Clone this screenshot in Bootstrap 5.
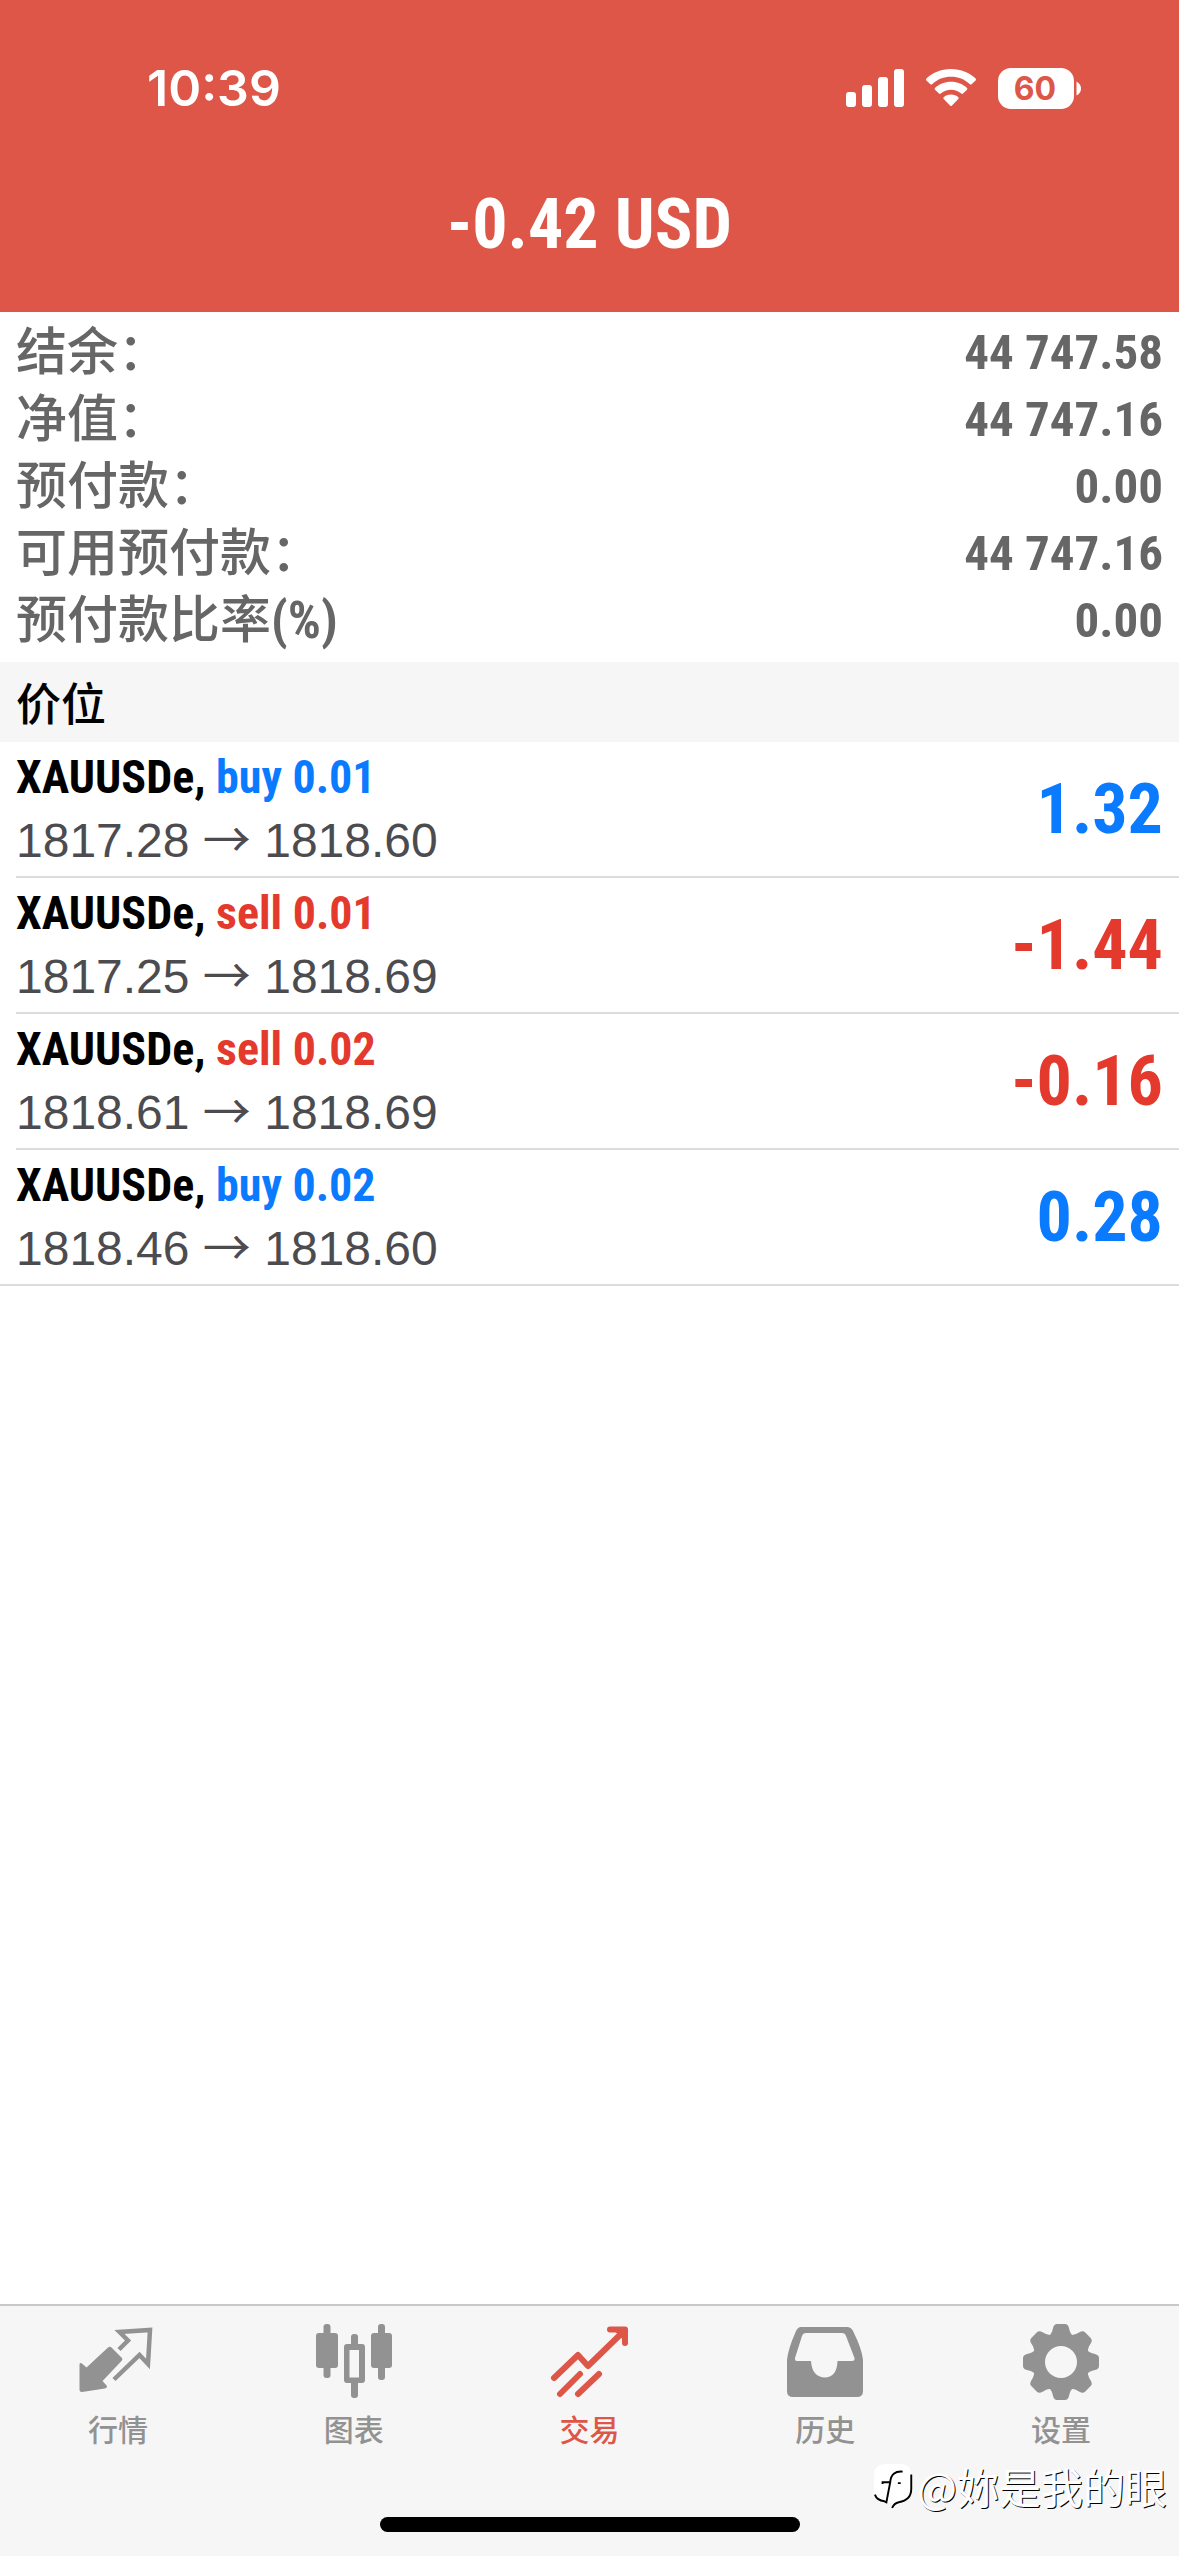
<!DOCTYPE html>
<html lang="zh-CN">
<head>
<meta charset="utf-8">
<meta name="viewport" content="width=device-width, initial-scale=1">
<title>交易</title>
<link rel="stylesheet" href="https://cdn.jsdelivr.net/npm/bootstrap@5.3.0/dist/css/bootstrap.min.css">
<style>
:root{--brand:#dd5648;--buy:#0a7aff;--sell:#e43a2e;--cond:"Roboto Condensed","Liberation Sans","Noto Sans CJK SC",sans-serif}
body{font-family:var(--cond);color:#000;background:#fff}
.app-head{background:var(--brand)}
.status-bar{height:176px;padding:0 98px 0 147px}
.clock{font:600 50px/1 Inter,sans-serif}
.status-icons{gap:22px}
.batt-text{font:700 32px Inter,sans-serif}
.balance{height:136px}
.balance-title{font-size:70px;line-height:96px;font-weight:700}
.summary{padding:7px 16px 8px;color:#666;font-size:51px;line-height:67px}
.summary dt{font-family:"Noto Sans CJK SC",sans-serif;font-weight:500;line-height:58px}
.summary dt b{font:700 52px/1 var(--cond)}
.summary dd{font:700 49px/67px var(--cond)}
.band{background:#f6f6f6;font:500 45px/80px "Noto Sans CJK SC",sans-serif;padding:0 16px}
.trade{height:136px;margin-left:16px;padding-right:16px;border-bottom:2px solid #dcdcde}
.trade-last{margin-left:0;padding-left:16px}
.trade-name{font-size:46px;line-height:64px;font-weight:700}
.trade-price{font:48px/64px "Liberation Sans",sans-serif;color:#4c4c50}
.arr{font-family:"Noto Sans CJK SC",sans-serif;line-height:1}
.pnl{font-size:70px;line-height:1;font-weight:700}
.c-buy{color:var(--buy)}.c-sell{color:var(--sell)}
.tabs{background:#f6f6f6;border-top:2px solid #c8c8c8;height:252px}
.tab-item{color:#929292;font:500 30px/52px "Noto Sans CJK SC",sans-serif;padding-top:16px}
.tab-item.active{color:var(--brand)}
.tab-item svg{width:80px;height:80px}
.home-bar{width:420px;height:15px;bottom:24px;border-radius:8px;background:#000}
.wmark{right:12px;bottom:40px;color:#fff;font:400 42px/60px "Noto Sans CJK SC",sans-serif;text-shadow:1px 1px 0 #000}
</style>
<script src="https://cdn.jsdelivr.net/npm/bootstrap@5.3.0/dist/js/bootstrap.bundle.min.js"></script>
</head>
<body>
<div class="d-flex flex-column min-vh-100">
<header class="app-head text-white">
  <div class="status-bar d-flex align-items-center justify-content-between">
    <span class="clock">10:39</span>
    <span class="status-icons d-flex align-items-center">
      <svg width="58" height="38" fill="#fff"><rect y="23" width="10" height="15" rx="3"/><rect x="16" y="16" width="10" height="22" rx="3"/><rect x="32" y="8" width="10" height="30" rx="3"/><rect x="48" width="10" height="38" rx="3"/></svg>
      <svg width="50" height="38" viewBox="0 0 50 38" fill="#fff"><path d="M25 0C35 0 44 4 49.600 9.600Q50.400 10.500 49.600 11.400L45.600 15.200Q44.800 16 43.900 15.200C38.500 10.200 32 7.800 25 7.800S11.500 10.200 6.100 15.200Q5.200 16 4.400 15.200L.400 11.400Q-.400 10.500 .400 9.600C6 4 15 0 25 0Z"/><path d="M25 12.800C31.500 12.800 37 15.200 41 19Q41.800 19.800 41 20.700L37 24.500Q36.200 25.300 35.300 24.500C32.300 22 29 20.700 25 20.700S17.700 22 14.700 24.500Q13.800 25.300 13 24.500L9 20.700Q8.200 19.800 9 19C13 15.200 18.500 12.800 25 12.800Z"/><path d="M25 25.500C28 25.500 30.500 26.600 32.300 28.200Q33.100 29 32.300 29.900L26 36.500Q25 37.500 24 36.500L17.700 29.900Q16.900 29 17.700 28.200C19.500 26.600 22 25.500 25 25.500Z"/></svg>
      <svg width="83" height="41" viewBox="0 0 83 41"><rect width="76" height="41" rx="13" fill="#fff"/><path d="M78.500 13.500Q83 16 83 20.500T78.500 27.500Z" fill="#fff"/><text class="batt-text" x="37" y="32" text-anchor="middle" fill="#dd5648">60</text></svg>
    </span>
  </div>
  <div class="balance"><h1 class="balance-title text-center mb-0">-0.42 USD</h1></div>
</header>
<main class="flex-grow-1">
  <dl class="summary mb-0">
    <div class="d-flex justify-content-between"><dt>结余：</dt><dd class="mb-0">44 747.58</dd></div>
    <div class="d-flex justify-content-between"><dt>净值：</dt><dd class="mb-0">44 747.16</dd></div>
    <div class="d-flex justify-content-between"><dt>预付款：</dt><dd class="mb-0">0.00</dd></div>
    <div class="d-flex justify-content-between"><dt>可用预付款：</dt><dd class="mb-0">44 747.16</dd></div>
    <div class="d-flex justify-content-between"><dt>预付款比率<b>(%)</b></dt><dd class="mb-0">0.00</dd></div>
  </dl>
  <h2 class="band mb-0">价位</h2>
  <ul class="list-unstyled mb-0">
    <li class="trade d-flex justify-content-between align-items-center"><div><div class="trade-name">XAUUSDe, <span class="c-buy">buy 0.01</span></div><div class="trade-price">1817.28 <span class="arr">→</span> 1818.60</div></div><span class="pnl c-buy">1.32</span></li>
    <li class="trade d-flex justify-content-between align-items-center"><div><div class="trade-name">XAUUSDe, <span class="c-sell">sell 0.01</span></div><div class="trade-price">1817.25 <span class="arr">→</span> 1818.69</div></div><span class="pnl c-sell">-1.44</span></li>
    <li class="trade d-flex justify-content-between align-items-center"><div><div class="trade-name">XAUUSDe, <span class="c-sell">sell 0.02</span></div><div class="trade-price">1818.61 <span class="arr">→</span> 1818.69</div></div><span class="pnl c-sell">-0.16</span></li>
    <li class="trade trade-last d-flex justify-content-between align-items-center"><div><div class="trade-name">XAUUSDe, <span class="c-buy">buy 0.02</span></div><div class="trade-price">1818.46 <span class="arr">→</span> 1818.60</div></div><span class="pnl c-buy">0.28</span></li>
  </ul>
</main>
<footer class="tabs position-relative">
  <nav class="d-flex">
    <a href="#" class="tab-item d-flex flex-column align-items-center text-decoration-none w-100"><svg viewBox="0 0 80 80" fill="currentColor"><path d="M30 25.500Q32 24 34 26L44 36Q45 37.500 43.500 39L24.500 59L29 64Q29 66 27 66.500L4 70Q1.500 70 1.500 67.500V42Q2.500 40 4.500 42L8.500 45.500Z"/><path d="M41 27.500L50 18.500L41.500 10L72 8L70 42L61.500 33L36 57.500" fill="none" stroke="currentColor" stroke-width="4.500"/></svg><span>行情</span></a>
    <a href="#" class="tab-item d-flex flex-column align-items-center text-decoration-none w-100"><svg viewBox="0 0 80 80" fill="currentColor"><rect x="9.500" y="2" width="7" height="54" rx="3"/><rect x="2" y="11" width="22" height="35" rx="3"/><rect x="64" y="2" width="7" height="56" rx="3"/><rect x="57" y="11" width="21" height="35" rx="3"/><rect x="37" y="12" width="7" height="14" rx="3"/><rect x="37" y="58" width="7" height="18" rx="3"/><path fill-rule="evenodd" d="M33 22H48Q51 22 51 25V58Q51 61 48 61H33Q30 61 30 58V25Q30 22 33 22ZM35.500 28V55.500H45V28Z"/></svg><span>图表</span></a>
    <a href="#" class="tab-item active d-flex flex-column align-items-center text-decoration-none w-100" aria-current="page"><svg viewBox="0 0 80 80" fill="none" stroke="currentColor" stroke-width="6" stroke-linecap="round" stroke-linejoin="round"><path d="M5 56L29 33L39 44L75 9M61 7.500H76V21M11 72L31 52M29 72L50 52"/><path d="M66 8H76V18Z" fill="currentColor" stroke-width="2"/></svg><span>交易</span></a>
    <a href="#" class="tab-item d-flex flex-column align-items-center text-decoration-none w-100"><svg viewBox="0 0 80 80" fill="currentColor"><path fill-rule="evenodd" d="M16 5H62Q66 5 68 9Q77 27 78 38V69Q78 75 72 75H8Q2 75 2 69V38Q3 27 11 9Q13 5 16 5ZM21 11Q18 11 17 14L10 36Q9.500 39 12 39H26Q27 55 40 55.500Q52 55 52.500 39H67Q70 39 69.500 36L61 14Q60 11 57 11Z"/></svg><span>历史</span></a>
    <a href="#" class="tab-item d-flex flex-column align-items-center text-decoration-none w-100"><svg viewBox="0 0 80 80" fill="currentColor"><defs><mask id="hole"><rect width="80" height="80" fill="#fff"/><circle cx="40" cy="40" r="16" fill="#000"/></mask><path id="tooth" d="M27 15Q31 12 32 6Q33 2 36 2H44Q47 2 48 6Q49 12 53 15V30H27Z"/></defs><g mask="url(#hole)"><circle cx="40" cy="40" r="28"/><use href="#tooth"/><use href="#tooth" transform="rotate(45 40 40)"/><use href="#tooth" transform="rotate(90 40 40)"/><use href="#tooth" transform="rotate(135 40 40)"/><use href="#tooth" transform="rotate(180 40 40)"/><use href="#tooth" transform="rotate(225 40 40)"/><use href="#tooth" transform="rotate(270 40 40)"/><use href="#tooth" transform="rotate(315 40 40)"/></g></svg><span>设置</span></a>
  </nav>
  <div class="home-bar position-absolute start-50 translate-middle-x"></div>
  <div class="wmark position-absolute d-flex align-items-center"><svg width="44" height="50" viewBox="0 0 46 50"><path d="M12 2H30Q40 3 40 13V28Q40 43 27 44L20 49V43L12 42Q1 40 1 30V13Q1 3 12 2Z" fill="#fff"/><path d="M31 10Q19 9 18 21H10V23M18 21L14 42L12 41Q4 40 2 34M26 22H29M40 13V28Q40 40 27 42Q22 43 20 48" fill="none" stroke="#000" stroke-width="2"/></svg><span>@妳是我的眼</span></div>
</footer>
</div>
</body>
</html>
